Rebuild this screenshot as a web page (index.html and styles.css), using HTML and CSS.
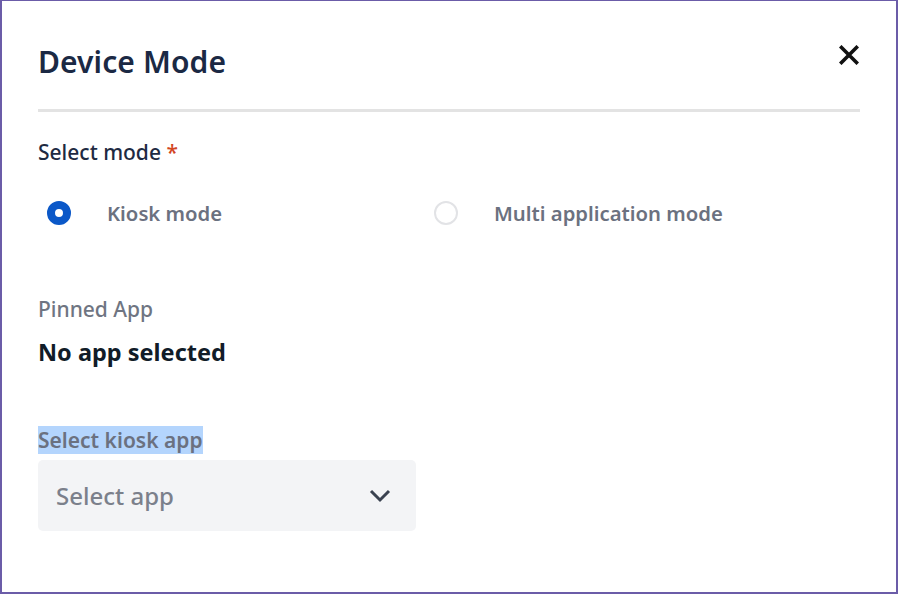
FILE: index.html
```html
<!DOCTYPE html>
<html lang="en">
<head>
  <meta charset="UTF-8">
  <meta name="viewport" content="width=device-width, initial-scale=1.0">
  <title>Device Mode</title>
  <link rel="stylesheet" href="styles.css">
</head>
<body>

<div class="modal">
  <header class="modal-header">
    <h1>Device Mode</h1>
    <button class="close-btn" aria-label="Close">
      <svg width="20" height="20" viewBox="0 0 20 20">
        <path d="M2.5 2.5 L17.5 17.5 M17.5 2.5 L2.5 17.5" stroke="#111" stroke-width="3.6" stroke-linecap="square" fill="none"/>
      </svg>
    </button>
  </header>

  <div class="field">
    <div class="field-label">Select mode <span class="required">*</span></div>
    <div class="radio-group">
      <label class="radio-option">
        <span class="radio checked"></span>
        <span class="radio-text">Kiosk mode</span>
      </label>
      <label class="radio-option">
        <span class="radio"></span>
        <span class="radio-text">Multi application mode</span>
      </label>
    </div>
  </div>

  <div class="pinned">
    <div class="pinned-label">Pinned App</div>
    <div class="pinned-value">No app selected</div>
  </div>

  <div class="kiosk">
    <div class="kiosk-label"><span class="selected-text">Select kiosk app</span></div>
    <div class="select-box">
      <span class="placeholder">Select app</span>
      <svg width="22" height="14" viewBox="0 0 22 14">
        <path d="M2 2 L11 11 L20 2" stroke="#3a4250" stroke-width="3" fill="none"/>
      </svg>
    </div>
  </div>
</div>

</body>
</html>
```

FILE: styles.css
```css
body {
  margin: 0;
  padding: 0;
  background-color: #fff;
  font-family: "Noto Sans", "Open Sans", sans-serif;
}
.modal {
  box-sizing: border-box;
  width: 898px;
  height: 594px;
  border: 2px solid #6b5ca8;
  border-top-width: 1px;
  padding: 0 36px;
}
.modal-header {
  display: flex;
  justify-content: space-between;
  align-items: flex-start;
  border-bottom: 3px solid #e3e3e3;
  height: 111px;
  box-sizing: border-box;
}
.modal-header h1 {
  margin: 40px 0 0;
  font-size: 30px;
  line-height: 42px;
  font-weight: 600;
  color: #1b2944;
  letter-spacing: 0.1px;
}
.close-btn {
  background: none;
  border: none;
  padding: 0;
  margin: 44px 1px 0 0;
  cursor: pointer;
  line-height: 0;
}
.field {
  padding-top: 26px;
}
.field-label {
  font-size: 21px;
  font-weight: 500;
  color: #1e2a42;
  line-height: 28px;
}
.required {
  color: #d2461f;
}
.radio-group {
  display: flex;
  margin-top: 33px;
}
.radio-option {
  display: flex;
  align-items: center;
  width: 387px;
  cursor: pointer;
}
.radio {
  box-sizing: border-box;
  width: 24px;
  height: 24px;
  border-radius: 50%;
  border: 2px solid #e2e3e6;
  margin-left: 9px;
  margin-right: 36px;
  flex-shrink: 0;
}
.radio.checked {
  border: 8px solid #0b58c8;
  background-color: #fff;
}
.radio-text {
  font-size: 20.3px;
  font-weight: 600;
  color: #6b7180;
}
.pinned {
  margin-top: 68px;
}
.pinned-label {
  font-size: 21px;
  font-weight: 500;
  color: #6f7582;
  line-height: 28px;
}
.pinned-value {
  margin-top: 13px;
  font-size: 23.5px;
  font-weight: 700;
  color: #111c28;
  line-height: 32px;
}
.kiosk {
  margin-top: 59px;
}
.kiosk-label {
  font-size: 21px;
  font-weight: 600;
  color: #6b7180;
  line-height: 26px;
}
.selected-text {
  background-color: #b4d5fd;
}
.select-box {
  box-sizing: border-box;
  width: 378px;
  height: 71px;
  margin-top: 7px;
  background-color: #f3f4f6;
  border-radius: 5px;
  display: flex;
  align-items: center;
  justify-content: space-between;
  padding: 0 25px 0 18px;
}
.placeholder {
  font-size: 24px;
  font-weight: 500;
  color: #7b808b;
}
```
